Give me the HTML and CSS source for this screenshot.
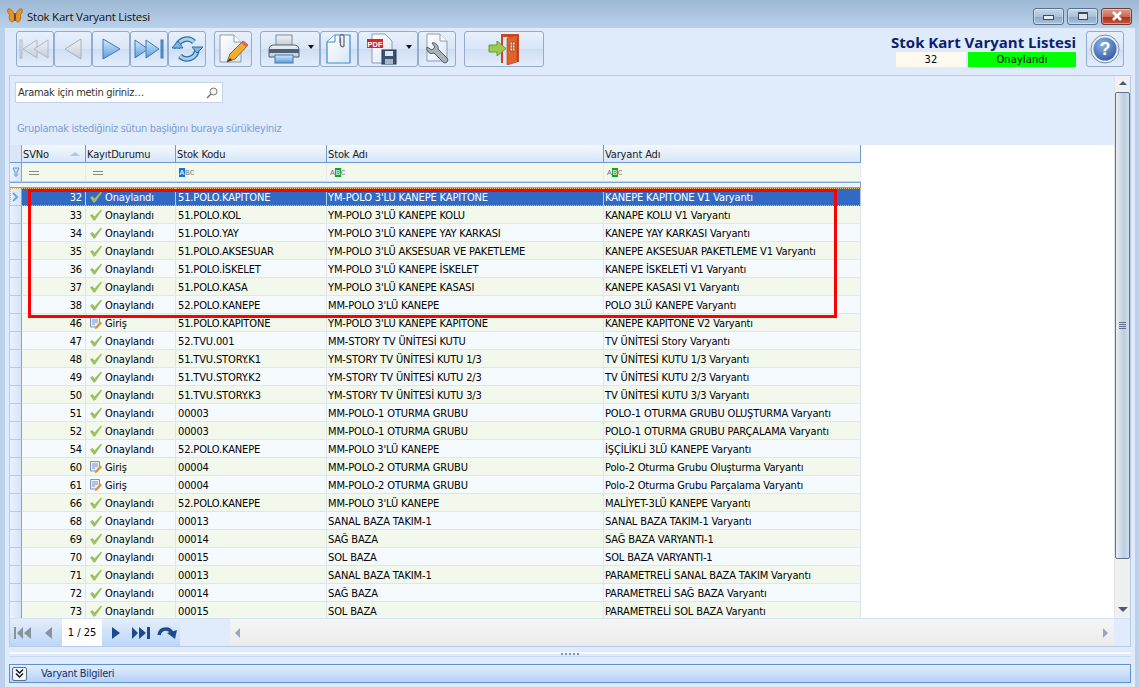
FILE: index.html
```html
<!DOCTYPE html>
<html lang="tr">

<head>
    <meta charset="utf-8">
    <title>Stok Kart Varyant Listesi</title>
    <link rel="stylesheet" href="styles.css">
</head>

<body>
    <svg class="defs" width="0" height="0">
        <defs>
            <linearGradient id="blue" x1="0" y1="0" x2="0" y2="1">
                <stop offset="0" stop-color="#d6e9fb" />
                <stop offset="1" stop-color="#5b9ddc" />
            </linearGradient>
            <linearGradient id="grey" x1="0" y1="0" x2="0" y2="1">
                <stop offset="0" stop-color="#f0f3f6" />
                <stop offset="1" stop-color="#c3ccd4" />
            </linearGradient>
            <linearGradient id="page" x1="0" y1="0" x2="1" y2="1">
                <stop offset="0" stop-color="#ffffff" />
                <stop offset="1" stop-color="#d9e6f6" />
            </linearGradient>
            <radialGradient id="ball" cx=".4" cy=".3" r=".8">
                <stop offset="0" stop-color="#8fb2e0" />
                <stop offset="1" stop-color="#2a58a4" />
            </radialGradient>
            <symbol id="tick" viewBox="0 0 14 14">
                <path d="M1 7.500 L3.500 6 L5.500 8.500 L12 1.500 L13 2.500 L6 12.500 L4.500 12.500 Z" fill="#a0bf5e" />
            </symbol>
            <symbol id="note" viewBox="0 0 14 14">
                <path d="M1.500 1.500 H10.500 V7 L7 11 H1.500 Z" fill="#e9eff8" stroke="#7d96c4" />
                <path d="M3 4 H9 M3 6 H9 M3 8 H6" stroke="#7d96c4" />
                <path d="M6.500 11 L11.500 5.500 L13 7 L8 12.500 L5.500 13 Z" fill="#dd9238" />
            </symbol>
        </defs>
    </svg>

    <div class="window">
        <header class="titlebar">
            <svg class="app-icon" viewBox="0 0 16 16" width="16" height="16">
                <path d="M7.500 8 C6 2 3 0 1 1 C0 3 1 6 3 7 C1 9 3 14 5 14 C7 14 7.500 11 7.500 8 Z" fill="#ee9320" stroke="#8a5312" stroke-width=".6" />
                <path d="M8.500 8 C10 2 13 0 15 1 C16 3 15 6 13 7 C15 9 13 14 11 14 C9 14 8.500 11 8.500 8 Z" fill="#ee9320" stroke="#8a5312" stroke-width=".6" />
                <path d="M8 5 V13" stroke="#3a2a10" stroke-width="1.200" />
            </svg>
            <span class="title-text">Stok Kart Varyant Listesi</span>
            <div class="win-buttons">
                <div class="win-btn"><span class="glyph-min"></span></div>
                <div class="win-btn"><span class="glyph-max"></span></div>
                <div class="win-btn win-close">
                    <svg viewBox="0 0 12 10" width="12" height="10">
                        <path d="M2 1 L10 9 M10 1 L2 9" stroke="#fff" stroke-width="2.600" />
                    </svg>
                </div>
            </div>
        </header>

        <div class="frame">
            <section class="toolbar">
                <div class="tool-group">
                    <button class="tool">
                        <svg viewBox="0 0 32 24" width="32" height="24" class="faded">
                            <rect x="1" y="3" width="2" height="18" fill="url(#grey)" stroke="#a9b2ba" />
                            <path d="M4 12 L18 3 V21 Z" fill="url(#grey)" stroke="#a9b2ba" />
                            <path d="M15 12 L29 3 V21 Z" fill="url(#grey)" stroke="#a9b2ba" />
                        </svg>
                    </button>
                    <button class="tool">
                        <svg viewBox="0 0 32 24" width="32" height="24">
                            <path d="M8 12 L24 2 V22 Z" fill="url(#grey)" stroke="#a9b2ba" />
                        </svg>
                    </button>
                    <button class="tool">
                        <svg viewBox="0 0 32 24" width="32" height="24">
                            <path d="M8 2 L25 12 L8 22 Z" fill="url(#blue)" stroke="#3f78b8" />
                        </svg>
                    </button>
                    <button class="tool">
                        <svg viewBox="0 0 32 24" width="32" height="24">
                            <path d="M2 3 L15 12 L2 21 Z" fill="url(#blue)" stroke="#3f78b8" />
                            <path d="M13 3 L26 12 L13 21 Z" fill="url(#blue)" stroke="#3f78b8" />
                            <rect x="28" y="3" width="2" height="18" fill="#5b9ddc" stroke="#3f78b8" />
                        </svg>
                    </button>
                    <button class="tool">
                        <svg viewBox="0 0 32 28" width="32" height="28">
                            <path d="M6 14 A10 10 0 0 1 23 7" fill="none" stroke="#2f6ea8" stroke-width="5.500" />
                            <path d="M6 14 A10 10 0 0 1 23 7" fill="none" stroke="#a9d0ee" stroke-width="3" />
                            <path d="M26 14 A10 10 0 0 1 9 21" fill="none" stroke="#2f6ea8" stroke-width="5.500" />
                            <path d="M26 14 A10 10 0 0 1 9 21" fill="none" stroke="#a9d0ee" stroke-width="3" />
                            <path d="M1 13 H12 L6 20 Z" fill="#7fb5e2" stroke="#2f6ea8" transform="rotate(180 6.500 13)" />
                            <path d="M20 14 H31 L26 8 Z" fill="#7fb5e2" stroke="#2f6ea8" transform="rotate(180 26 13)" />
                        </svg>
                    </button>
                </div>

                <button class="tool">
                    <svg viewBox="0 0 32 30" width="32" height="30">
                        <path d="M3 1 H17 L24 8 V28 H3 Z" fill="url(#page)" stroke="#8e9cae" />
                        <path d="M17 1 V8 H24" fill="#fff" stroke="#8e9cae" />
                        <path d="M10 28 L13 20 L26 7 L31 11 L18 25 Z" fill="#f2ac2f" stroke="#a3651a" />
                        <path d="M26 7 L31 11 L29 13 L24 9 Z" fill="#e4606a" />
                        <path d="M10 28 L13 24 L15 26 Z" fill="#333" />
                    </svg>
                </button>

                <div class="tool-group">
                    <button class="tool tool-drop">
                        <svg viewBox="0 0 32 30" width="32" height="30">
                            <rect x="8" y="1" width="16" height="11" fill="url(#grey)" stroke="#78899c" />
                            <path d="M1 16 Q1 11 6 11 H26 Q31 11 31 16 V23 H1 Z" fill="url(#grey)" stroke="#4d6075" />
                            <rect x="1" y="15" width="30" height="4" fill="#4d6075" />
                            <rect x="7" y="21" width="18" height="8" fill="url(#blue)" stroke="#4578ad" />
                        </svg>
                        <span class="caret"></span>
                    </button>
                    <button class="tool">
                        <svg viewBox="0 0 28 32" width="28" height="32">
                            <path d="M2 9 L10 2 H25 V30 H2 Z" fill="url(#page)" stroke="#3f8ace" stroke-width="1.200" />
                            <path d="M2 9 H10 V2" fill="#fff" stroke="#3f8ace" />
                            <path d="M15 10 V3 Q17 0 19 3 V13 Q17 15 15.500 12 V5" fill="none" stroke="#66707c" stroke-width="1.300" />
                        </svg>
                    </button>
                    <button class="tool tool-drop">
                        <svg viewBox="0 0 32 32" width="32" height="32">
                            <path d="M6 1 H19 L26 8 V30 H6 Z" fill="url(#page)" stroke="#8e9cae" />
                            <rect x="1" y="6" width="16" height="9" fill="#d6262a" />
                            <text x="9" y="13.500" class="pdf-text">PDF</text>
                            <rect x="16" y="17" width="14" height="14" fill="#3a5273" stroke="#24364e" />
                            <rect x="19" y="18" width="8" height="5" fill="#dfe7f0" />
                            <rect x="19" y="26" width="8" height="5" fill="#a7b6c8" />
                        </svg>
                        <span class="caret"></span>
                    </button>
                    <button class="tool">
                        <svg viewBox="0 0 28 32" width="28" height="32">
                            <path d="M4 1 H17 L24 8 V28 H4 Z" fill="url(#page)" stroke="#8e9cae" />
                            <path d="M17 1 V8 H24" fill="#fff" stroke="#8e9cae" />
                            <path d="M4 14 A5 5 0 0 0 11 20 L20 29 A2.500 2.500 0 0 0 24 25 L15 16 A5 5 0 0 0 9 10 L12 14 L9 17 Z" fill="#aab2ba" stroke="#4f5a66" />
                        </svg>
                    </button>
                </div>

                <button class="tool tool-exit">
                    <svg viewBox="0 0 32 32" width="32" height="32">
                        <path d="M13 1 H31 V29 H28 V4 H15 V30 H13 Z" fill="#c8491f" />
                        <path d="M19 5 L29 2 V29 L19 32 Z" fill="#e3622b" stroke="#a83d18" stroke-width=".6" />
                        <path d="M22 9 H27 V18 H22 Z" fill="#f4d7a8" stroke="#a83d18" stroke-width=".7" />
                        <path d="M24.500 9 V18 M22 12 H27 M22 15 H27" stroke="#a83d18" stroke-width=".7" />
                        <path d="M1 12 H9 V8 L18 15.500 L9 23 V19 H1 Z" fill="#9ccb4e" stroke="#6e9a2c" />
                    </svg>
                </button>

                <div class="doc-info">
                    <h1 class="doc-title">Stok Kart Varyant Listesi</h1>
                    <div class="doc-status">
                        <span class="doc-no">32</span>
                        <span class="doc-state">Onaylandı</span>
                    </div>
                </div>

                <button class="tool tool-help">
                    <svg viewBox="0 0 30 30" width="30" height="30">
                        <circle cx="15" cy="15" r="14" fill="#e8eef7" stroke="#7e8fa8" />
                        <circle cx="15" cy="15" r="11.500" fill="url(#ball)" />
                        <text x="15" y="21" class="help-text">?</text>
                    </svg>
                </button>
            </section>

            <section class="panel">
                <div class="panel-main">
                    <div class="grid-area">
                        <div class="search-area">
                            <div class="search-box">
                                <span>Aramak için metin giriniz…</span>
                                <svg viewBox="0 0 12 12" width="12" height="12">
                                    <circle cx="7.500" cy="4.500" r="3.500" fill="#f4f4f4" stroke="#777" />
                                    <path d="M5 7 L1 11" stroke="#777" stroke-width="1.600" />
                                </svg>
                            </div>
                            <div class="group-hint">Gruplamak istediğiniz sütun başlığını buraya sürükleyiniz</div>
                        </div>

                        <div class="grid">
                            <div class="row head">
                                <div class="ind"></div>
                                <div class="cell">SVNo<span class="sort-up"></span></div>
                                <div class="cell">KayıtDurumu</div>
                                <div class="cell">Stok Kodu</div>
                                <div class="cell">Stok Adı</div>
                                <div class="cell">Varyant Adı</div>
                            </div>
                            <div class="row filter">
                                <div class="ind">
                                    <svg viewBox="0 0 8 10" width="8" height="10">
                                        <path d="M1 1 H7 L5 5 V9 H3 V5 Z" fill="#cfe2f6" stroke="#5f9bd8" />
                                    </svg>
                                </div>
                                <div class="cell"><span class="eq"></span></div>
                                <div class="cell"><span class="eq"></span></div>
                                <div class="cell"><span class="abc"><b class="mark-blue">A</b>BC</span></div>
                                <div class="cell"><span class="abc">A<b class="mark-green">B</b>C</span></div>
                                <div class="cell"><span class="abc">A<b class="mark-green">B</b>C</span></div>
                            </div>
                            <div class="filter-gap"></div>

                            <div class="rows">
                                <div class="row selected">
                                    <div class="ind"><svg viewBox="0 0 7 10" width="7" height="10"><path d="M1 1 L5 5 L1 9" fill="none" stroke="#6aa7e0" stroke-width="2" /></svg></div>
                                    <div class="cell num">32</div>
                                    <div class="cell"><svg class="st" width="14" height="14"><use href="#tick" /></svg>Onaylandı</div>
                                    <div class="cell">51.POLO.KAPİTONE</div>
                                    <div class="cell">YM-POLO 3'LÜ KANEPE KAPİTONE</div>
                                    <div class="cell">KANEPE KAPİTONE V1 Varyantı</div>
                                </div>
                                <div class="row alt">
                                    <div class="ind"></div><div class="cell num">33</div>
                                    <div class="cell"><svg class="st" width="14" height="14"><use href="#tick" /></svg>Onaylandı</div>
                                    <div class="cell">51.POLO.KOL</div>
                                    <div class="cell">YM-POLO 3'LÜ KANEPE KOLU</div>
                                    <div class="cell">KANAPE KOLU V1 Varyantı</div>
                                </div>
                                <div class="row">
                                    <div class="ind"></div><div class="cell num">34</div>
                                    <div class="cell"><svg class="st" width="14" height="14"><use href="#tick" /></svg>Onaylandı</div>
                                    <div class="cell">51.POLO.YAY</div>
                                    <div class="cell">YM-POLO 3'LÜ KANEPE YAY KARKASI</div>
                                    <div class="cell">KANEPE YAY KARKASI Varyantı</div>
                                </div>
                                <div class="row alt">
                                    <div class="ind"></div><div class="cell num">35</div>
                                    <div class="cell"><svg class="st" width="14" height="14"><use href="#tick" /></svg>Onaylandı</div>
                                    <div class="cell">51.POLO.AKSESUAR</div>
                                    <div class="cell">YM-POLO 3'LÜ AKSESUAR VE PAKETLEME</div>
                                    <div class="cell">KANEPE AKSESUAR PAKETLEME V1 Varyantı</div>
                                </div>
                                <div class="row">
                                    <div class="ind"></div><div class="cell num">36</div>
                                    <div class="cell"><svg class="st" width="14" height="14"><use href="#tick" /></svg>Onaylandı</div>
                                    <div class="cell">51.POLO.İSKELET</div>
                                    <div class="cell">YM-POLO 3'LÜ KANEPE İSKELET</div>
                                    <div class="cell">KANEPE İSKELETİ V1 Varyantı</div>
                                </div>
                                <div class="row alt">
                                    <div class="ind"></div><div class="cell num">37</div>
                                    <div class="cell"><svg class="st" width="14" height="14"><use href="#tick" /></svg>Onaylandı</div>
                                    <div class="cell">51.POLO.KASA</div>
                                    <div class="cell">YM-POLO 3'LÜ KANEPE KASASI</div>
                                    <div class="cell">KANEPE KASASI V1 Varyantı</div>
                                </div>
                                <div class="row">
                                    <div class="ind"></div><div class="cell num">38</div>
                                    <div class="cell"><svg class="st" width="14" height="14"><use href="#tick" /></svg>Onaylandı</div>
                                    <div class="cell">52.POLO.KANEPE</div>
                                    <div class="cell">MM-POLO 3'LÜ KANEPE</div>
                                    <div class="cell">POLO 3LÜ KANEPE Varyantı</div>
                                </div>
                                <div class="row alt">
                                    <div class="ind"></div><div class="cell num">46</div>
                                    <div class="cell"><svg class="st" width="14" height="14"><use href="#note" /></svg>Giriş</div>
                                    <div class="cell">51.POLO.KAPİTONE</div>
                                    <div class="cell">YM-POLO 3'LÜ KANEPE KAPİTONE</div>
                                    <div class="cell">KANEPE KAPİTONE V2 Varyantı</div>
                                </div>
                                <div class="row">
                                    <div class="ind"></div><div class="cell num">47</div>
                                    <div class="cell"><svg class="st" width="14" height="14"><use href="#tick" /></svg>Onaylandı</div>
                                    <div class="cell">52.TVU.001</div>
                                    <div class="cell">MM-STORY TV ÜNİTESİ KUTU</div>
                                    <div class="cell">TV ÜNİTESİ Story Varyantı</div>
                                </div>
                                <div class="row alt">
                                    <div class="ind"></div><div class="cell num">48</div>
                                    <div class="cell"><svg class="st" width="14" height="14"><use href="#tick" /></svg>Onaylandı</div>
                                    <div class="cell">51.TVU.STORY.K1</div>
                                    <div class="cell">YM-STORY TV ÜNİTESİ KUTU 1/3</div>
                                    <div class="cell">TV ÜNİTESİ KUTU 1/3 Varyantı</div>
                                </div>
                                <div class="row">
                                    <div class="ind"></div><div class="cell num">49</div>
                                    <div class="cell"><svg class="st" width="14" height="14"><use href="#tick" /></svg>Onaylandı</div>
                                    <div class="cell">51.TVU.STORY.K2</div>
                                    <div class="cell">YM-STORY TV ÜNİTESİ KUTU 2/3</div>
                                    <div class="cell">TV ÜNİTESİ KUTU 2/3 Varyantı</div>
                                </div>
                                <div class="row alt">
                                    <div class="ind"></div><div class="cell num">50</div>
                                    <div class="cell"><svg class="st" width="14" height="14"><use href="#tick" /></svg>Onaylandı</div>
                                    <div class="cell">51.TVU.STORY.K3</div>
                                    <div class="cell">YM-STORY TV ÜNİTESİ KUTU 3/3</div>
                                    <div class="cell">TV ÜNİTESİ KUTU 3/3 Varyantı</div>
                                </div>
                                <div class="row">
                                    <div class="ind"></div><div class="cell num">51</div>
                                    <div class="cell"><svg class="st" width="14" height="14"><use href="#tick" /></svg>Onaylandı</div>
                                    <div class="cell">00003</div>
                                    <div class="cell">MM-POLO-1 OTURMA GRUBU</div>
                                    <div class="cell">POLO-1 OTURMA GRUBU OLUŞTURMA Varyantı</div>
                                </div>
                                <div class="row alt">
                                    <div class="ind"></div><div class="cell num">52</div>
                                    <div class="cell"><svg class="st" width="14" height="14"><use href="#tick" /></svg>Onaylandı</div>
                                    <div class="cell">00003</div>
                                    <div class="cell">MM-POLO-1 OTURMA GRUBU</div>
                                    <div class="cell">POLO-1 OTURMA GRUBU PARÇALAMA Varyantı</div>
                                </div>
                                <div class="row">
                                    <div class="ind"></div><div class="cell num">54</div>
                                    <div class="cell"><svg class="st" width="14" height="14"><use href="#tick" /></svg>Onaylandı</div>
                                    <div class="cell">52.POLO.KANEPE</div>
                                    <div class="cell">MM-POLO 3'LÜ KANEPE</div>
                                    <div class="cell">İŞÇİLİKLİ 3LÜ KANEPE Varyantı</div>
                                </div>
                                <div class="row alt">
                                    <div class="ind"></div><div class="cell num">60</div>
                                    <div class="cell"><svg class="st" width="14" height="14"><use href="#note" /></svg>Giriş</div>
                                    <div class="cell">00004</div>
                                    <div class="cell">MM-POLO-2 OTURMA GRUBU</div>
                                    <div class="cell">Polo-2 Oturma Grubu Oluşturma Varyantı</div>
                                </div>
                                <div class="row">
                                    <div class="ind"></div><div class="cell num">61</div>
                                    <div class="cell"><svg class="st" width="14" height="14"><use href="#note" /></svg>Giriş</div>
                                    <div class="cell">00004</div>
                                    <div class="cell">MM-POLO-2 OTURMA GRUBU</div>
                                    <div class="cell">Polo-2 Oturma Grubu Parçalama Varyantı</div>
                                </div>
                                <div class="row alt">
                                    <div class="ind"></div><div class="cell num">66</div>
                                    <div class="cell"><svg class="st" width="14" height="14"><use href="#tick" /></svg>Onaylandı</div>
                                    <div class="cell">52.POLO.KANEPE</div>
                                    <div class="cell">MM-POLO 3'LÜ KANEPE</div>
                                    <div class="cell">MALİYET-3LÜ KANEPE Varyantı</div>
                                </div>
                                <div class="row">
                                    <div class="ind"></div><div class="cell num">68</div>
                                    <div class="cell"><svg class="st" width="14" height="14"><use href="#tick" /></svg>Onaylandı</div>
                                    <div class="cell">00013</div>
                                    <div class="cell">SANAL BAZA TAKIM-1</div>
                                    <div class="cell">SANAL BAZA TAKIM-1 Varyantı</div>
                                </div>
                                <div class="row alt">
                                    <div class="ind"></div><div class="cell num">69</div>
                                    <div class="cell"><svg class="st" width="14" height="14"><use href="#tick" /></svg>Onaylandı</div>
                                    <div class="cell">00014</div>
                                    <div class="cell">SAĞ BAZA</div>
                                    <div class="cell">SAĞ BAZA VARYANTI-1</div>
                                </div>
                                <div class="row">
                                    <div class="ind"></div><div class="cell num">70</div>
                                    <div class="cell"><svg class="st" width="14" height="14"><use href="#tick" /></svg>Onaylandı</div>
                                    <div class="cell">00015</div>
                                    <div class="cell">SOL BAZA</div>
                                    <div class="cell">SOL BAZA VARYANTI-1</div>
                                </div>
                                <div class="row alt">
                                    <div class="ind"></div><div class="cell num">71</div>
                                    <div class="cell"><svg class="st" width="14" height="14"><use href="#tick" /></svg>Onaylandı</div>
                                    <div class="cell">00013</div>
                                    <div class="cell">SANAL BAZA TAKIM-1</div>
                                    <div class="cell">PARAMETRELİ SANAL BAZA TAKIM Varyantı</div>
                                </div>
                                <div class="row">
                                    <div class="ind"></div><div class="cell num">72</div>
                                    <div class="cell"><svg class="st" width="14" height="14"><use href="#tick" /></svg>Onaylandı</div>
                                    <div class="cell">00014</div>
                                    <div class="cell">SAĞ BAZA</div>
                                    <div class="cell">PARAMETRELİ SAĞ BAZA Varyantı</div>
                                </div>
                                <div class="row alt">
                                    <div class="ind"></div><div class="cell num">73</div>
                                    <div class="cell"><svg class="st" width="14" height="14"><use href="#tick" /></svg>Onaylandı</div>
                                    <div class="cell">00015</div>
                                    <div class="cell">SOL BAZA</div>
                                    <div class="cell">PARAMETRELİ SOL BAZA Varyantı</div>
                                </div>
                                <!-- kirmizi isaret -->
                                <div class="red-mark"></div>
                            </div>
                        </div>
                    </div>

                    <div class="vscroll">
                        <span class="arrow-up"></span>
                        <div class="vthumb"><span class="grip"></span></div>
                        <span class="arrow-down"></span>
                    </div>
                </div>

                <div class="pager">
                    <div class="pager-nav">
                        <svg viewBox="0 0 20 14" width="20" height="14"><path d="M1 1 H3 V13 H1 Z M10 1 V13 L4 7 Z M18 1 V13 L11 7 Z" fill="#8a929a" /></svg>
                        <svg viewBox="0 0 10 14" width="10" height="14"><path d="M9 1 V13 L2 7 Z" fill="#8a929a" /></svg>
                        <span class="page-no">1 / 25</span>
                        <svg viewBox="0 0 10 14" width="10" height="14"><path d="M1 1 V13 L9 7 Z" fill="#1d4a8c" /></svg>
                        <svg viewBox="0 0 20 14" width="20" height="14"><path d="M1 1 V13 L7 7 Z M8 1 V13 L15 7 Z M16 1 H19 V13 H16 Z" fill="#1d4a8c" /></svg>
                        <svg class="pager-redo" viewBox="0 0 20 14" width="20" height="14">
                            <path d="M2 9 Q3 3 9 3 Q13 3 15 7" fill="none" stroke="#1d4a8c" stroke-width="3.500" />
                            <path d="M10 7 L20 4 L18 13 Z" fill="#1d4a8c" />
                        </svg>
                    </div>
                    <div class="hscroll">
                        <span class="arrow-left"></span>
                        <span class="arrow-right"></span>
                    </div>
                </div>
            </section>

            <div class="splitter"><span class="dots"></span></div>

            <div class="detail-bar">
                <span class="expand">
                    <svg viewBox="0 0 9 9" width="9" height="9">
                        <path d="M1 0.500 L4.500 4 L8 0.500 M1 4.500 L4.500 8 L8 4.500" fill="none" stroke="#111" stroke-width="1.300" />
                    </svg>
                </span>
                <span class="detail-text">Varyant Bilgileri</span>
            </div>
        </div>
    </div>
</body>

</html>
```

FILE: styles.css
```css
* {
    box-sizing: border-box;
}

html,
body {
    margin: 0;
    height: 100%;
    overflow: hidden;
}

body {
    font-family: "DejaVu Sans Condensed", "DejaVu Sans", sans-serif;
    font-size: 11px;
    color: #000;
}

.defs {
    position: absolute;
}

.window {
    width: 1139px;
    height: 688px;
    display: flex;
    flex-direction: column;
    background: #bad2ec;
}

/* titel */
.titlebar {
    height: 28px;
    flex: none;
    display: flex;
    align-items: center;
    padding: 0 7px;
    background: linear-gradient(#9db8d3, #b9d2ec);
}

.app-icon {
    margin-top: 3px;
}

.title-text {
    margin-left: 4px;
    margin-top: 4px;
    font-family: "Open Sans", sans-serif;
    font-size: 11.500px;
    letter-spacing: -.25px;
    color: #111;
}

.win-buttons {
    margin-left: auto;
    display: flex;
    gap: 3px;
    margin-top: 4px;
}

.win-btn {
    width: 31px;
    height: 17px;
    border: 1px solid #5b6f88;
    border-radius: 3px;
    display: flex;
    align-items: center;
    justify-content: center;
    background: linear-gradient(#c5d8ec 0%, #a9c1da 50%, #8ba8c6 51%, #a8c4e0 100%);
    box-shadow: inset 0 0 0 1px rgba(255, 255, 255, .4);
}

.win-close {
    background: linear-gradient(#dc9c8c 0%, #c96a55 50%, #a9301a 51%, #c8553a 100%);
    border-color: #6e3b35;
}

.glyph-min {
    width: 11px;
    height: 5px;
    margin-top: 3px;
    background: #e4ecf4;
    border: 1px solid #3b4a5e;
}

.glyph-max {
    width: 10px;
    height: 8px;
    border: 1px solid #3b4a5e;
    border-top-width: 2px;
    background: #dbe5f0;
}

.frame {
    flex: 1;
    margin: 0 4px 1px 5px;
    padding: 0 4px 4px;
    background: #dfeafb;
    display: flex;
    flex-direction: column;
    min-height: 0;
}

/* toolbar */
.toolbar {
    height: 47px;
    flex: none;
    display: flex;
    align-items: flex-start;
    padding: 3px 7px 0;
    gap: 8px;
}

.tool-group {
    display: flex;
}

.tool {
    width: 38px;
    height: 36px;
    padding: 0;
    border: 1px solid #93abcc;
    border-radius: 3px;
    background: linear-gradient(#e8f0fc, #d9e6f7 50%, #cedff4 51%, #e3edfb);
    display: flex;
    align-items: center;
    justify-content: center;
}

.tool-drop {
    width: 60px;
    justify-content: flex-start;
    padding-left: 7px;
}

.tool-exit {
    width: 80px;
}

.tool-help {
    margin-left: 2px;
}

.faded {
    opacity: .85;
}

.caret {
    margin-left: 8px;
    margin-bottom: 4px;
    border-left: 3.500px solid transparent;
    border-right: 3.500px solid transparent;
    border-top: 4px solid #111;
}

.pdf-text {
    font-family: "Liberation Sans", sans-serif;
    font-size: 7.500px;
    font-weight: bold;
    fill: #fff;
    text-anchor: middle;
}

.help-text {
    font-family: "Liberation Sans", sans-serif;
    font-size: 18px;
    font-weight: bold;
    fill: #fff;
    text-anchor: middle;
}

.doc-info {
    margin-left: auto;
    width: 180px;
    margin-top: 2px;
}

.doc-title {
    margin: 0;
    display: flex;
    justify-content: flex-end;
    font-family: "Open Sans", sans-serif;
    font-size: 15px;
    line-height: 19px;
    font-weight: 700;
    color: #0b1f6e;
    white-space: nowrap;
}

.doc-status {
    display: flex;
    gap: 2px;
    height: 15px;
    line-height: 15px;
    letter-spacing: .1px;
    text-align: center;
}

.doc-no {
    width: 70px;
    background: #fffaf0;
}

.doc-state {
    flex: 1;
    background: #00ff00;
}

/* ana panel */
.panel {
    height: 572px;
    flex: none;
    border: 1px solid #b5cbe6;
    display: flex;
    flex-direction: column;
    background: #fff;
}

.panel-main {
    flex: 1;
    display: flex;
    min-height: 0;
}

.grid-area {
    flex: 1;
    min-width: 0;
    overflow: hidden;
}

.search-area {
    height: 69px;
    padding: 6px 0 0 5px;
    background: #e0ebfb;
}

.search-box {
    width: 208px;
    height: 21px;
    background: #fff;
    border: 1px solid #c4d3e6;
    display: flex;
    align-items: center;
    justify-content: space-between;
    padding: 0 4px 0 2px;
    color: #333;
    letter-spacing: -.3px;
}

.group-hint {
    margin: 19px 0 0 2px;
    color: #7d9fd2;
    letter-spacing: -.33px;
}

.grid {
    position: relative;
    background: #fff;
}

.row {
    display: grid;
    grid-template-columns: 12px 64px 90px 151px 277px 257px;
    width: 851px;
    height: 18px;
    background: #f5faff;
}

.row.alt {
    background: #f2f9ec;
}

.cell {
    display: flex;
    align-items: center;
    padding: 1px 0 0 2px;
    border-right: 1px solid #dce6f1;
    border-bottom: 1px solid #dce6f1;
    white-space: nowrap;
    overflow: hidden;
    letter-spacing: -.14px;
}

.rows .cell:nth-child(n+5) {
    padding-left: 1px;
}

.num {
    justify-content: flex-end;
    padding-right: 3px;
}

.st {
    margin: 0 2px 0 1px;
    flex: none;
}

.ind {
    background: linear-gradient(90deg, #eaf2fd, #d5e4f8);
    border-right: 1px solid #7ea5d8;
    border-bottom: 1px solid #b5cbe6;
    display: flex;
    align-items: center;
    justify-content: center;
}

.head .cell {
    padding-left: 1px;
    background: linear-gradient(#f3f8fe, #d8e6f8);
    border-right: 1px solid #6e9bd6;
    border-bottom: 1px solid #6e9bd6;
    color: #1a1a1a;
}

.head .ind {
    background: #dbe7f8;
    border-bottom-color: #6e9bd6;
}

.sort-up {
    margin-left: auto;
    margin-right: 5px;
    border-left: 5px solid transparent;
    border-right: 5px solid transparent;
    border-bottom: 4px solid #a9c8ea;
}

.row.filter {
    height: 19px;
    background: #f2f9ec;
}

.filter .cell {
    padding-left: 3px;
    border-right-color: #e4edf6;
    border-bottom-color: #c4d7ee;
}

.eq {
    margin-left: 4px;
    width: 10px;
    height: 4px;
    border-top: 1px solid #888;
    border-bottom: 1px solid #888;
}

.abc {
    font-family: "Liberation Mono", monospace;
    font-size: 8px;
    letter-spacing: 0;
    line-height: 9px;
    color: #777;
}

.abc b {
    display: inline-block;
    width: 6px;
    height: 9px;
    color: #fff;
    text-align: center;
    font-weight: normal;
}

.mark-blue {
    background: #1573d8;
}

.mark-green {
    background: #12a02e;
}

.filter-gap {
    width: 851px;
    height: 6px;
    background: #edf4fd;
    border: 1px solid #7ea5d8;
    border-left: none;
}

.rows {
    position: relative;
}

.row.selected {
    background: #316ac5;
    outline: 1px dotted #e0c070;
    outline-offset: -1px;
}

.selected .cell {
    color: #fff;
    border-right-color: #b8cdeb;
    border-bottom-color: #316ac5;
}

/* isaret kutusu */
.red-mark {
    position: absolute;
    left: 18px;
    top: 1px;
    width: 809px;
    height: 129px;
    border: 3px solid #ff0000;
}

/* kaydirma */
.vscroll {
    width: 16px;
    flex: none;
    background: #f0f0f0;
    border-left: 1px solid #e4e4e4;
    display: flex;
    flex-direction: column;
    align-items: center;
}

.arrow-up {
    margin-top: 5px;
    border-left: 4px solid transparent;
    border-right: 4px solid transparent;
    border-bottom: 4px solid #4a5a78;
}

.arrow-down {
    margin-top: auto;
    margin-bottom: 6px;
    border-left: 5px solid transparent;
    border-right: 5px solid transparent;
    border-top: 5px solid #4a5a78;
}

.vthumb {
    width: 15px;
    height: 467px;
    margin-top: 7px;
    border: 1px solid #5c6f96;
    border-radius: 2px;
    background: linear-gradient(90deg, #e9eff7, #bccfe0 60%, #d4e0ec);
    display: flex;
    align-items: center;
    justify-content: center;
}

.grip {
    width: 7px;
    height: 7px;
    background: repeating-linear-gradient(#5d6f8c 0 1px, transparent 1px 2px);
}

.pager {
    height: 28px;
    flex: none;
    display: flex;
    background: #e0ebfb;
    border-top: 1px solid #d5e2f3;
}

.pager-nav {
    width: 170px;
    padding-left: 3px;
    flex: none;
    display: flex;
    align-items: center;
    gap: 10px;
    background: linear-gradient(#e4eefc, #bcd6f8);
}

.pager-nav svg {
    flex: none;
}

.pager-nav .pager-redo {
    margin-left: -4px;
}

.page-no {
    width: 40px;
    height: 100%;
    margin: 0 -1px;
    background: #fff;
    display: flex;
    align-items: center;
    justify-content: center;
    flex: none;
}

.hscroll {
    flex: 1;
    margin: 0 16px 0 50px;
    background: linear-gradient(#f5f5f5, #ebebeb);
    display: flex;
    align-items: center;
    justify-content: space-between;
    padding: 0 6px 0 5px;
}

.arrow-left {
    border-top: 5px solid transparent;
    border-bottom: 5px solid transparent;
    border-right: 5px solid #97a6c6;
}

.arrow-right {
    border-top: 5px solid transparent;
    border-bottom: 5px solid transparent;
    border-left: 5px solid #97a6c6;
}

.splitter {
    height: 17px;
    flex: none;
    display: flex;
    justify-content: center;
    padding-top: 6px;
    background: linear-gradient(#dfeafb 5px, #f6faff 5px, #f6faff 7px, #dfeafb 7px, #dfeafb 9px, #c4d9f3 9px, #c4d9f3 10px, #dfeafb 10px);
}

.dots {
    width: 19px;
    height: 2px;
    background: repeating-linear-gradient(90deg, #7d96b8 0 2px, transparent 2px 4px);
}

.detail-bar {
    height: 19px;
    flex: none;
    border: 1px solid #5e90d4;
    background: linear-gradient(#e3eefd, #b5d2f8);
    display: flex;
    align-items: center;
    padding-left: 2px;
}

.expand {
    width: 15px;
    height: 14px;
    border: 1px solid #5e6f86;
    border-radius: 2px;
    background: #f1f5fb;
    display: flex;
    align-items: center;
    justify-content: center;
}

.detail-text {
    margin-left: 14px;
    color: #14306e;
    letter-spacing: -.3px;
}
```
